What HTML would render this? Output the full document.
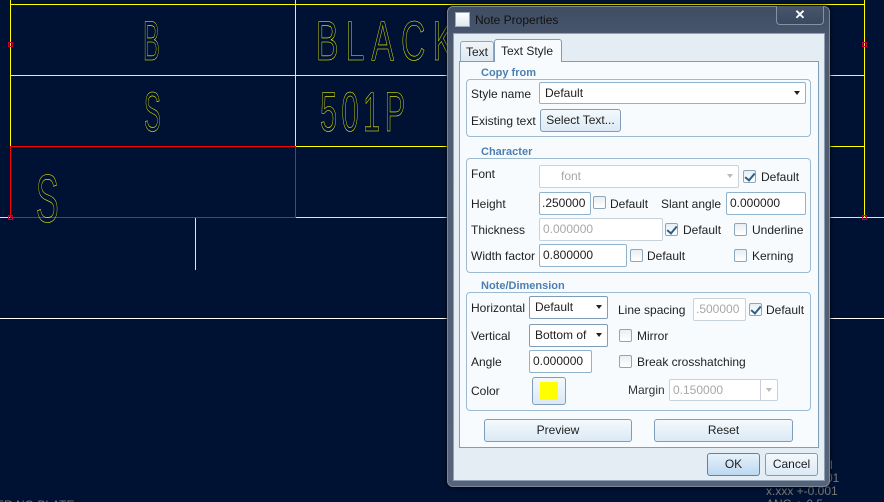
<!DOCTYPE html>
<html><head><meta charset="utf-8"><style>
*{margin:0;padding:0;box-sizing:border-box}
body{width:884px;height:502px;background:#001233;position:relative;overflow:hidden;font-family:"Liberation Sans",Tahoma,sans-serif;font-size:12px;color:#1e1e1e}
.a{position:absolute}
.lbl{position:absolute;font-size:12px;line-height:14px;white-space:nowrap}
.in{position:absolute;background:#fff;border:1px solid #8fb3cc;border-radius:2px;font-size:12px;line-height:20px;padding-left:3px;white-space:nowrap;overflow:hidden}
.dis{border-color:#c8d2da;color:#a8a8a8}
.cb{position:absolute;width:13px;height:13px;border:1px solid #8fa6b8;border-radius:2px;background:linear-gradient(#e8eef3,#fff)}
.cb.on::after{content:"";position:absolute;left:3px;top:0px;width:4px;height:8px;border:solid #2a5f8a;border-width:0 2px 2px 0;transform:rotate(40deg)}
.btn{position:absolute;border:1px solid #7f9db9;border-radius:3px;background:linear-gradient(#f4f9fd,#dbe9f5);text-align:center;font-size:12px;line-height:20px}
.grp{position:absolute;border:1px solid #9dbad0;border-radius:4px}
.gt{position:absolute;background:#f8fbfd;color:#4c7fb0;font-weight:bold;font-size:11px;padding:0 3px;line-height:12px}
.arr{position:absolute;right:5px;top:8px;width:0;height:0;border-left:3px solid transparent;border-right:3px solid transparent;border-top:4px solid #222}
</style></head><body>
<svg class="a" style="left:0;top:0" width="884" height="502">
<g stroke="#ffff00" stroke-width="1" fill="none" shape-rendering="crispEdges">
<line x1="10" y1="4.5" x2="864" y2="4.5"/>
<line x1="10.5" y1="0" x2="10.5" y2="146"/>
<line x1="295.5" y1="0" x2="295.5" y2="217"/>
<line x1="10" y1="75.5" x2="864" y2="75.5"/>
<line x1="295" y1="146.5" x2="864" y2="146.5"/>
<line x1="0" y1="217.5" x2="884" y2="217.5"/>
<line x1="864.5" y1="0" x2="864.5" y2="217"/>
<line x1="195.5" y1="218" x2="195.5" y2="270"/>
</g>
<line x1="0" y1="318.5" x2="884" y2="318.5" stroke="#fff" shape-rendering="crispEdges"/>
<rect x="10.5" y="146.5" width="285" height="71" stroke="#ff0000" fill="none" shape-rendering="crispEdges"/>
<g stroke="#c0003a" fill="none"><rect x="8.5" y="42.5" width="4" height="4"/><rect x="8.5" y="215.5" width="4" height="4"/><rect x="862.5" y="42.5" width="4" height="4"/><rect x="862.5" y="215.5" width="4" height="4"/></g>
<g fill="none" stroke="#ffff00" stroke-width="0.6" font-family="Liberation Sans, sans-serif">
<text transform="translate(143,60) scale(0.45,1)" font-size="56">B</text>
<text transform="translate(316,60) scale(0.6,1)" font-size="56" letter-spacing="12">BLACK</text>
<text transform="translate(144,131) scale(0.45,1)" font-size="56">S</text>
<text transform="translate(320,131) scale(0.55,1)" font-size="56" letter-spacing="8">501P</text>
<text transform="translate(36,222) scale(0.5,1)" font-size="68">S</text>
</g>
<g fill="#777" font-size="12" font-family="Liberation Sans, sans-serif">
<text x="766" y="495">x.xxx  +-0.001</text>
<text x="826" y="482">01</text>
<text x="830" y="469">l</text>
<text x="766" y="508">ANG  +-0.5</text>
<text x="-4" y="509">ER  NO  PLATE</text>
</g>
</svg>

<!-- dialog -->
<div class="a" style="left:447px;top:6px;width:383px;height:481px;background:linear-gradient(#3e4c64,#4d5a70 40px,#56637a);border:1px solid #7a8799;border-radius:6px;box-shadow:0 0 4px #000"></div>
<div class="a" style="left:455px;top:12px;width:15px;height:15px;background:linear-gradient(#fff,#dfe8ef);border:1px solid #9ab"></div>
<div class="lbl" style="left:475px;top:13px;color:#111;font-size:12px">Note Properties</div>
<div class="a" style="left:776px;top:6px;width:48px;height:19px;border:1px solid #8592a6;border-top:none;border-radius:0 0 4px 4px;background:linear-gradient(#47556d,#3a4860);color:#fff;text-align:center;font-weight:bold;font-size:13px;line-height:17px">✕</div>
<div class="a" style="left:453px;top:33px;width:372px;height:448px;background:#e4edf4;border:1px solid #8ea0b2"></div>
<!-- tabs -->
<div class="a" style="left:460px;top:41px;width:34px;height:21px;border:1px solid #8ba6bd;border-bottom:none;border-radius:3px 3px 0 0;background:linear-gradient(#f0f5f9,#dde8f0)"></div>
<div class="lbl" style="left:466px;top:45px">Text</div>
<div class="a" style="left:459px;top:61px;width:360px;height:387px;background:#f8fbfd;border:1px solid #7f9db6"></div>
<div class="a" style="left:494px;top:39px;width:68px;height:23px;border:1px solid #7f9db6;border-bottom:none;border-radius:3px 3px 0 0;background:#f8fbfd"></div>
<div class="lbl" style="left:501px;top:44px">Text Style</div>

<!-- Copy from -->
<div class="grp" style="left:466px;top:79px;width:345px;height:58px"></div>
<div class="gt" style="left:478px;top:67px">Copy from</div>
<div class="lbl" style="left:471px;top:87px">Style name</div>
<div class="in" style="left:539px;top:82px;width:267px;height:22px;padding-left:5px">Default<span class="arr"></span></div>
<div class="lbl" style="left:471px;top:114px">Existing text</div>
<div class="btn" style="left:540px;top:109px;width:81px;height:23px">Select Text...</div>

<!-- Character -->
<div class="grp" style="left:466px;top:158px;width:345px;height:115px"></div>
<div class="gt" style="left:478px;top:146px">Character</div>
<div class="lbl" style="left:471px;top:167px">Font</div>
<div class="in dis" style="left:539px;top:165px;width:200px;height:23px;padding-left:21px">font<span class="arr" style="border-top-color:#bbb"></span></div>
<div class="cb on" style="left:743px;top:170px"></div><div class="lbl" style="left:761px;top:170px">Default</div>

<div class="lbl" style="left:471px;top:197px">Height</div>
<div class="in" style="left:539px;top:192px;width:52px;height:23px;padding-left:2px">.250000</div>
<div class="cb" style="left:593px;top:196px"></div><div class="lbl" style="left:610px;top:197px">Default</div>
<div class="lbl" style="left:661px;top:197px">Slant angle</div>
<div class="in" style="left:726px;top:192px;width:80px;height:23px">0.000000</div>

<div class="lbl" style="left:471px;top:223px">Thickness</div>
<div class="in dis" style="left:539px;top:218px;width:124px;height:23px">0.000000</div>
<div class="cb on" style="left:665px;top:223px"></div><div class="lbl" style="left:683px;top:223px">Default</div>
<div class="cb" style="left:734px;top:223px"></div><div class="lbl" style="left:752px;top:223px">Underline</div>

<div class="lbl" style="left:471px;top:249px">Width factor</div>
<div class="in" style="left:539px;top:244px;width:88px;height:23px">0.800000</div>
<div class="cb" style="left:630px;top:249px"></div><div class="lbl" style="left:647px;top:249px">Default</div>
<div class="cb" style="left:734px;top:249px"></div><div class="lbl" style="left:752px;top:249px">Kerning</div>

<!-- Note/Dimension -->
<div class="grp" style="left:466px;top:292px;width:345px;height:119px"></div>
<div class="gt" style="left:478px;top:280px">Note/Dimension</div>
<div class="lbl" style="left:471px;top:301px">Horizontal</div>
<div class="in" style="left:529px;top:296px;width:79px;height:23px;border-color:#7f9db6;padding-left:5px">Default<span class="arr"></span></div>
<div class="lbl" style="left:618px;top:303px">Line spacing</div>
<div class="in dis" style="left:693px;top:298px;width:53px;height:23px;padding-left:2px">.500000</div>
<div class="cb on" style="left:749px;top:303px"></div><div class="lbl" style="left:766px;top:303px">Default</div>

<div class="lbl" style="left:471px;top:329px">Vertical</div>
<div class="in" style="left:529px;top:324px;width:79px;height:23px;border-color:#7f9db6;padding-left:5px">Bottom of<span class="arr"></span></div>
<div class="cb" style="left:619px;top:329px"></div><div class="lbl" style="left:637px;top:329px">Mirror</div>

<div class="lbl" style="left:471px;top:355px">Angle</div>
<div class="in" style="left:529px;top:350px;width:63px;height:23px;padding-left:3px">0.000000</div>
<div class="cb" style="left:619px;top:355px"></div><div class="lbl" style="left:637px;top:355px">Break crosshatching</div>

<div class="lbl" style="left:471px;top:384px">Color</div>
<div class="btn" style="left:532px;top:377px;width:34px;height:28px"></div>
<div class="a" style="left:540px;top:382px;width:18px;height:18px;background:#ffff00"></div>
<div class="lbl" style="left:628px;top:383px;color:#333">Margin</div>
<div class="in dis" style="left:669px;top:379px;width:109px;height:22px">0.150000<span style="position:absolute;right:16px;top:0;height:20px;border-left:1px solid #ccd"></span><span class="arr" style="border-top-color:#bbb"></span></div>

<div class="btn" style="left:484px;top:419px;width:148px;height:23px">Preview</div>
<div class="btn" style="left:654px;top:419px;width:139px;height:23px">Reset</div>

<div class="btn" style="left:707px;top:453px;width:53px;height:23px;border-color:#4f86b5;background:linear-gradient(#e6f2fb,#bcd8ef)">OK</div>
<div class="btn" style="left:765px;top:453px;width:53px;height:23px">Cancel</div>
</body></html>
